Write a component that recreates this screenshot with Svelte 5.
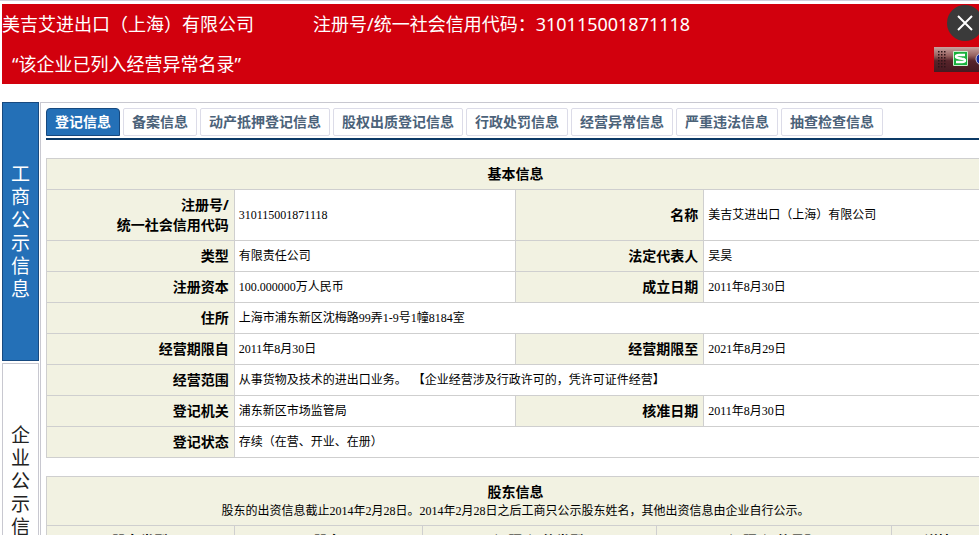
<script lang="ts">
	type Field = { label: string; value: string; second?: string };

	const company = '美吉艾进出口（上海）有限公司';
	const regNo = '310115001871118';

	const tabs = [
		'登记信息',
		'备案信息',
		'动产抵押登记信息',
		'股权出质登记信息',
		'行政处罚信息',
		'经营异常信息',
		'严重违法信息',
		'抽查检查信息'
	];

	const sections = ['工商公示信息', '企业公示信息'];

	const rows: Field[][] = [
		[
			{ label: '注册号/', second: '统一社会信用代码', value: regNo },
			{ label: '名称', value: company }
		],
		[
			{ label: '类型', value: '有限责任公司' },
			{ label: '法定代表人', value: '吴昊' }
		],
		[
			{ label: '注册资本', value: '100.000000万人民币' },
			{ label: '成立日期', value: '2011年8月30日' }
		],
		[{ label: '住所', value: '上海市浦东新区沈梅路99弄1-9号1幢8184室' }],
		[
			{ label: '经营期限自', value: '2011年8月30日' },
			{ label: '经营期限至', value: '2021年8月29日' }
		],
		[
			{
				label: '经营范围',
				value: '从事货物及技术的进出口业务。\u00a0\u00a0【企业经营涉及行政许可的，凭许可证件经营】'
			}
		],
		[
			{ label: '登记机关', value: '浦东新区市场监管局' },
			{ label: '核准日期', value: '2011年8月30日' }
		],
		[{ label: '登记状态', value: '存续（在营、开业、在册）' }]
	];

	const holderColumns = ['股东类型', '股东', '证照/证件类型', '证照/证件号码', '详情'];

	let activeTab = $state(0);
	let activeSection = $state(0);
</script>

<div class="page" lang="zh-CN">
	<header class="banner">
		<div class="banner__line">
			<span>{company}</span>
			<span>注册号/统一社会信用代码：{regNo}</span>
		</div>
		<div class="banner__warning">“该企业已列入经营异常名录”</div>
	</header>

	<button class="close" aria-label="关闭">
		<svg width="18" height="18" viewBox="0 0 18 18" fill="none" stroke="#fff" stroke-width="2">
			<path d="M2 2 L16 16 M16 2 L2 16"></path>
		</svg>
	</button>

	<div class="ime" aria-hidden="true">
		<svg width="45" height="25" viewBox="0 0 45 25">
			<defs>
				<linearGradient id="ime-bar" x1="0" y1="0" x2="0" y2="1">
					<stop offset="0" stop-color="#c9a3a0"></stop>
					<stop offset="0.35" stop-color="#96615f"></stop>
					<stop offset="0.55" stop-color="#57242a"></stop>
					<stop offset="1" stop-color="#451a21"></stop>
				</linearGradient>
				<pattern id="ime-grip" x="4" y="4" width="3" height="3" patternUnits="userSpaceOnUse">
					<rect width="1.5" height="1.5" fill="#2b1418"></rect>
				</pattern>
			</defs>
			<rect width="45" height="25" fill="url(#ime-bar)"></rect>
			<rect x="4" y="4" width="9" height="18" fill="url(#ime-grip)"></rect>
			<rect x="19" y="4" width="15" height="15" rx="1" fill="#c9f0cc"></rect>
			<rect x="20" y="5" width="13" height="13" fill="#19b13c"></rect>
			<path d="M31 8 H25 Q22 8 22 9.5 Q22 11 25 11.2 L28 11.7 Q31 12 31 13.5 Q31 15 28 15 H22" fill="none" stroke="#fff" stroke-width="2.4"></path>
			<circle cx="48" cy="12" r="6" fill="#132a9c" stroke="#c8c8dd" stroke-width="1"></circle>
		</svg>
	</div>

	<main class="layout">
		<nav class="sections" aria-label="公示信息">
			{#each sections as name, i}
				<button class="section" class:active={activeSection === i} onclick={() => (activeSection = i)}>
					<span>{name}</span>
				</button>
			{/each}
		</nav>

		<div class="content">
			<nav class="tabs">
				{#each tabs as tab, i}
					<button class="tab" class:active={activeTab === i} onclick={() => (activeTab = i)}>{tab}</button>
				{/each}
			</nav>

			<table class="details">
				<colgroup>
					<col class="w20" /><col class="w30" /><col class="w20" /><col class="w30" />
				</colgroup>
				<thead>
					<tr><th class="title" colspan="4">基本信息</th></tr>
				</thead>
				<tbody>
					{#each rows as row}
						<tr>
							{#each row as field}
								<th scope="row">{field.label}{#if field.second}<br />{field.second}{/if}</th>
								<td colspan={row.length === 1 ? 3 : 1}>{field.value}</td>
							{/each}
						</tr>
					{/each}
				</tbody>
			</table>

			<table class="details">
				<colgroup>
					<col class="w20" /><col class="w20" /><col class="w25" /><col class="w25" /><col class="w10" />
				</colgroup>
				<thead>
					<tr>
						<th class="title" colspan="5">
							股东信息
							<p class="note">
								股东的出资信息截止2014年2月28日。2014年2月28日之后工商只公示股东姓名，其他出资信息由企业自行公示。
							</p>
						</th>
					</tr>
					<tr>
						{#each holderColumns as column}
							<th class="title" scope="col">{column}</th>
						{/each}
					</tr>
				</thead>
			</table>
		</div>
	</main>
</div>

<style>
	:global(body) {
		background: #fff;
		overflow: hidden;
	}

	.page {
		position: relative;
		height: 100vh;
		overflow: hidden;
		box-sizing: border-box;
		padding-left: 2px;
		border-top: 1px solid #cfd0dc;
		font-family: 'Noto Sans', 'Noto Sans CJK SC', sans-serif;
		color: #000;
	}

	button {
		font-family: inherit;
		cursor: pointer;
	}

	.banner {
		margin-top: 3px;
		background: #d2000d;
		color: #fff;
		font-size: 18px;
		line-height: 40px;
		white-space: nowrap;
	}

	.banner__line {
		display: flex;
		gap: 59px;
	}

	.banner__warning {
		padding-left: 10px;
	}

	.close {
		position: absolute;
		top: 4px;
		right: -4px;
		width: 36px;
		height: 36px;
		padding: 0;
		border: none;
		border-radius: 50%;
		background: #3a3a3a;
		display: grid;
		place-items: center;
	}

	.ime {
		position: absolute;
		top: 46px;
		right: 0;
		line-height: 0;
	}

	.layout {
		display: flex;
		min-width: 988px;
		margin-top: 18px;
	}

	.sections {
		display: flex;
		flex-direction: column;
		gap: 2px;
		width: 37px;
		margin-right: 1px;
		flex-shrink: 0;
	}

	.section {
		display: flex;
		justify-content: center;
		padding: 60px 0 59px;
		border: 1px solid #c8c8d0;
		background: #fff;
		color: #222;
		font-size: 19px;
		line-height: 23px;
	}

	.section span {
		width: 20px;
		word-break: break-all;
	}

	.section.active {
		border-color: #17497f;
		background: #2470b7;
		color: #fff;
	}

	.content {
		flex: 1;
		padding: 5px 4px 0 5px;
		border-top: 1px solid #c8c8d0;
		border-left: 1px solid #c8c8d0;
	}

	.tabs {
		display: flex;
		gap: 3px;
		padding-bottom: 2px;
		border-bottom: 2px solid #0c3a66;
	}

	.tab {
		padding: 3px 8px;
		border: 1px solid #dcdce8;
		border-radius: 2px;
		background: #fff;
		color: #4b6279;
		font-size: 14px;
		font-weight: bold;
		line-height: 20px;
		white-space: nowrap;
	}

	.tab.active {
		border-color: #17497f;
		border-radius: 4px 4px 0 0;
		background: #2470b7;
		color: #fff;
	}

	.details {
		width: 100%;
		margin-top: 18px;
		border-collapse: collapse;
		table-layout: fixed;
	}

	.w10 {
		width: 10%;
	}

	.w20 {
		width: 20%;
	}

	.w25 {
		width: 25%;
	}

	.w30 {
		width: 30%;
	}

	.details th,
	.details td {
		padding: 5px 5px 5px 4px;
		border: 1px solid #cfcfcf;
		line-height: 20px;
	}

	.details th {
		background: #f2f2e2;
		font-size: 14px;
		font-weight: bold;
		text-align: right;
	}

	.details th.title {
		text-align: center;
	}

	.details td,
	.note {
		font-family: 'Liberation Serif', 'Noto Sans CJK SC', serif;
		font-size: 12px;
	}

	.note {
		margin: 0;
		font-weight: normal;
		line-height: 18px;
	}
</style>
